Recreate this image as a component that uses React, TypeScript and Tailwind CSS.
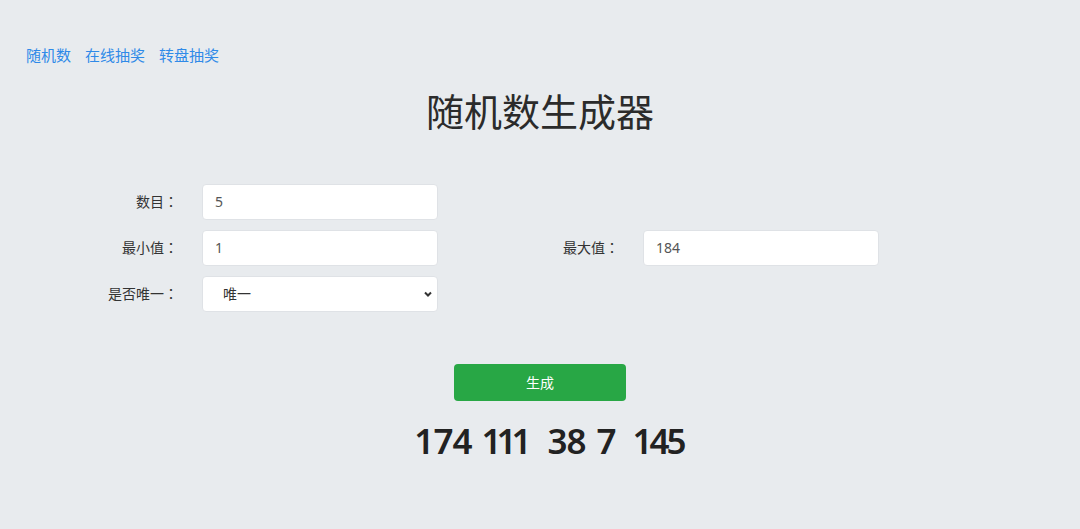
import React from "react";

const font = { fontFamily: '"Noto Sans", "Noto Sans CJK SC", sans-serif' };

function Label({ text }: { text: string }) {
  return (
    <label className="w-[178px] text-right text-[14px] text-[#333]">
      {text}
      <span style={{ fontFamily: '"Noto Sans CJK JP", sans-serif' }}>：</span>
    </label>
  );
}

function Field({ label, value }: { label: string; value: string }) {
  return (
    <div className="flex items-center h-[36px]">
      <Label text={label} />
      <input
        readOnly
        value={value}
        className="ml-[24px] w-[236px] h-[36px] rounded-[4px] border border-[#dfe2e6] bg-white px-[12px] text-[14px] text-[#555] outline-none"
      />
    </div>
  );
}

export default function App() {
  const nums = [
    { n: "174", m: "" },
    { n: "111", m: "ml-[10px] tracking-[-5px]" },
    { n: "38", m: "ml-[21px]" },
    { n: "7", m: "ml-[11px]" },
    { n: "145", m: "ml-[17px] tracking-[-3px]" },
  ];
  return (
    <div className="w-full min-h-screen bg-[#e8ebee]" style={font}>
      <nav className="flex gap-[14px] pl-[26px] pt-[44px] text-[15px] text-[#2f8ae8]">
        <a href="#">随机数</a>
        <a href="#">在线抽奖</a>
        <a href="#">转盘抽奖</a>
      </nav>

      <h1 className="mt-[18px] text-center text-[38px] leading-[52px] text-[#2b2b2b]">随机数生成器</h1>

      <div className="mt-[47px] grid grid-cols-[441px_441px] gap-y-[10px]">
        <Field label="数目" value="5" />
        <div />
        <Field label="最小值" value="1" />
        <Field label="最大值" value="184" />
        <div className="flex items-center h-[36px]">
          <Label text="是否唯一" />
          <div className="relative ml-[24px] w-[236px] h-[36px]">
            <select className="w-full h-full appearance-none rounded-[4px] border border-[#dfe2e6] bg-white pl-[20px] text-[14px] text-[#333] outline-none">
              <option>唯一</option>
            </select>
            <svg
              className="pointer-events-none absolute right-[5px] top-[13px]"
              width="10"
              height="10"
              viewBox="0 0 10 10"
              fill="none"
              stroke="#333"
              strokeWidth="2"
            >
              <path d="M2 3.5 L5 6.5 L8 3.5" />
            </svg>
          </div>
        </div>
      </div>

      <div className="mt-[52px] flex justify-center">
        <button className="w-[172px] h-[37px] rounded-[4px] bg-[#28a745] text-[14px] text-white">生成</button>
      </div>

      <div className="mt-[16px] flex justify-center pl-[18px] text-[35px] font-semibold tracking-[-1px] text-[#222] leading-[48px]">
        {nums.map((x, i) => (
          <span key={i} className={x.m}>
            {x.n}
          </span>
        ))}
      </div>
    </div>
  );
}
